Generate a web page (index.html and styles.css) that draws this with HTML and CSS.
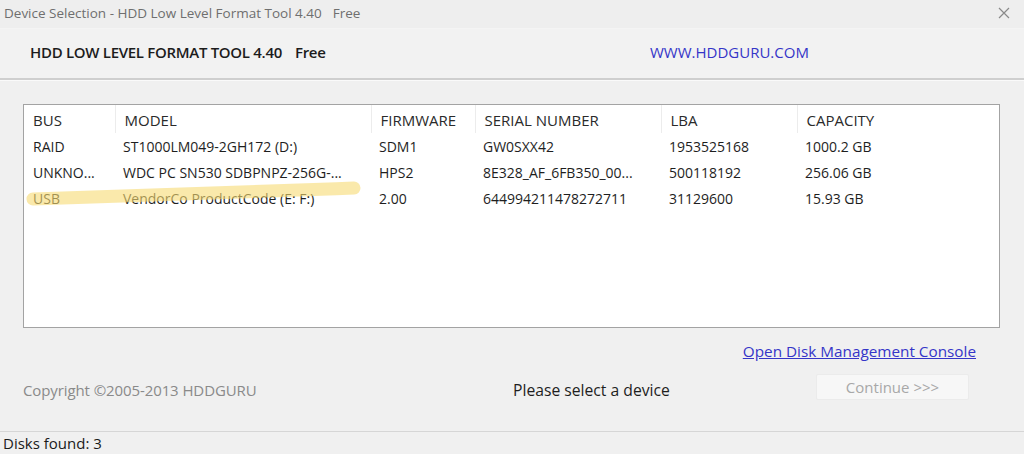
FILE: index.html
```html
<!DOCTYPE html>
<html lang="en">
    <head>
        <meta charset="utf-8" />
        <title>Device Selection - HDD Low Level Format Tool 4.40</title>
        <link rel="stylesheet" href="styles.css">
    </head>
    <body>
        <div class="window">
            <div class="titlebar">
                <span class="title">Device Selection - HDD Low Level Format Tool 4.40<span class="free">Free</span></span>
                <span class="close">
                    <svg width="12" height="12" viewBox="0 0 12 12"><path d="M1 1 L11 11 M11 1 L1 11" stroke="#8a8a8a" stroke-width="1.2" fill="none"/></svg>
                </span>
            </div>
            <div class="banner">
                <span class="product">HDD LOW LEVEL FORMAT TOOL 4.40<span class="free">Free</span></span>
                <span class="site">WWW.HDDGURU.COM</span>
            </div>
            <div class="main">
                <div class="listbox">
                    <table class="devices">
                        <colgroup>
                            <col class="c-bus"><col class="c-model"><col class="c-fw"><col class="c-serial"><col class="c-lba"><col>
                        </colgroup>
                        <thead>
                            <tr><th>BUS</th><th>MODEL</th><th>FIRMWARE</th><th>SERIAL NUMBER</th><th>LBA</th><th class="last">CAPACITY</th></tr>
                        </thead>
                        <tbody>
                            <tr><td>RAID</td><td>ST1000LM049-2GH172 (D:)</td><td>SDM1</td><td>GW0SXX42</td><td>1953525168</td><td>1000.2 GB</td></tr>
                            <tr><td>UNKNO...</td><td>WDC PC SN530 SDBPNPZ-256G-...</td><td>HPS2</td><td>8E328_AF_6FB350_00...</td><td>500118192</td><td>256.06 GB</td></tr>
                            <tr><td>USB</td><td>VendorCo ProductCode (E: F:)</td><td>2.00</td><td>644994211478272711</td><td>31129600</td><td>15.93 GB</td></tr>
                        </tbody>
                    </table>
                    <!-- highlighter stroke over the USB row -->
                    <svg class="marker" width="340" height="34" viewBox="0 0 340 34">
                        <path d="M7 26 C 90 24, 210 20, 328 15" stroke="#f8dc74" stroke-width="13" stroke-linecap="round" fill="none"/>
                    </svg>
                </div>
                <div class="linkrow">
                    <a href="#" class="console">Open Disk Management Console</a>
                </div>
                <div class="footer">
                    <span class="copyright">Copyright &copy;2005-2013 HDDGURU</span>
                    <span class="prompt">Please select a device</span>
                    <button class="continue" disabled>Continue &gt;&gt;&gt;</button>
                </div>
            </div>
            <div class="statusbar">Disks found: 3</div>
        </div>
    </body>
</html>
```

FILE: styles.css
```css
html, body {
    margin: 0;
    padding: 0;
}
body {
    background-color: #f0f0f0;
    font-family: "Open Sans", "Noto Sans", "Liberation Sans", sans-serif;
    color: #1e1e1e;
}
.window {
    width: 1024px;
    height: 454px;
    display: flex;
    flex-direction: column;
    background-color: #f0f0f0;
}
.titlebar {
    height: 26px;
    display: flex;
    align-items: center;
    justify-content: space-between;
    padding: 0 14px 2px 4px;
    background-color: #eeeeee;
}
.title {
    font-size: 13.5px;
    color: #6f6f6f;
}
.title .free {
    margin-left: 11px;
}
.close {
    display: flex;
}
.banner {
    height: 45px;
    display: flex;
    align-items: center;
    padding: 0 0 4px 30px;
    border-top: 1px solid #f4f4f4;
    border-bottom: 2px solid #cfcfcf;
    background-color: #f2f2f2;
}
.product {
    width: 620px;
    font-size: 15px;
    font-weight: 600;
    color: #1c1c1c;
    letter-spacing: -0.3px;
}
.product .free {
    margin-left: 13px;
}
.site {
    font-size: 15px;
    color: #3535c8;
}
.main {
    flex: 1;
    padding: 23px 24px 0 23px;
    border-top: 1px solid #fafafa;
}
.listbox {
    position: relative;
    height: 222px;
    background-color: #ffffff;
    border: 1px solid #a3a3a3;
    overflow: hidden;
}
.devices {
    border-collapse: collapse;
    table-layout: fixed;
    width: 100%;
    font-size: 14px;
}
.c-bus { width: 91px; }
.c-model { width: 256px; }
.c-fw { width: 104px; }
.c-serial { width: 186px; }
.c-lba { width: 136px; }
.devices th {
    height: 26px;
    padding: 2px 0 0 9px;
    text-align: left;
    font-size: 15px;
    font-weight: normal;
    color: #2a2a2a;
    border-right: 1px solid #ececec;
}
.devices th.last {
    border-right: none;
}
.devices td {
    height: 26px;
    padding: 0 0 0 8px;
    white-space: nowrap;
    overflow: hidden;
    color: #1e1e1e;
}
.devices td:first-child {
    padding-left: 9px;
}
.marker {
    position: absolute;
    left: 2px;
    top: 68px;
    opacity: 0.6;
}
.linkrow {
    height: 46px;
    display: flex;
    align-items: center;
    justify-content: flex-end;
    padding-right: 24px;
}
.console {
    font-size: 15.3px;
    color: #3535c8;
    text-decoration: underline;
}
.footer {
    height: 32px;
    display: flex;
    align-items: center;
}
.copyright {
    width: 490px;
    font-size: 15px;
    color: #8a8a8a;
    letter-spacing: -0.1px;
}
.prompt {
    width: 303px;
    font-size: 15.7px;
    color: #1e1e1e;
}
.continue {
    width: 153px;
    height: 26px;
    margin-bottom: 7px;
    font-family: inherit;
    font-size: 15px;
    color: #a8a8a8;
    background-color: #f7f7f7;
    border: 1px solid #ebebeb;
    border-radius: 2px;
}
.statusbar {
    height: 22px;
    padding: 0 0 0 3px;
    display: flex;
    align-items: center;
    font-size: 15px;
    color: #1a1a1a;
    border-top: 1px solid #d6d6d6;
    background-color: #f0f0f0;
}
```
